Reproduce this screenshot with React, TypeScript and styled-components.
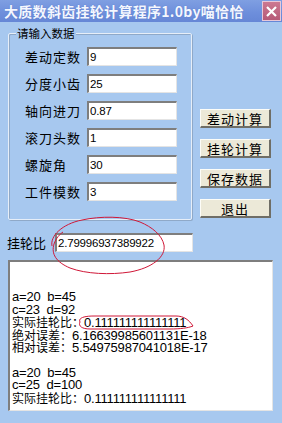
import React from "react";
import styled, { createGlobalStyle } from "styled-components";

const GlobalStyle = createGlobalStyle`
  html, body {
    margin: 0;
    padding: 0;
    background: #a7c8ef;
  }
  * { box-sizing: border-box; }
`;

const CJK = `"Noto Sans CJK SC", "Liberation Sans", sans-serif`;
const LATIN = `"Liberation Sans", Arial, sans-serif`;

const Window = styled.div`
  position: relative;
  width: 282px;
  height: 423px;
  background: #a7c8ef;
  overflow: hidden;
  display: flex;
  flex-direction: column;
`;

const TitleBar = styled.div`
  height: 22px;
  background: linear-gradient(#7f9fe2, #6d8edb 60%, #6687d6);
  display: flex;
  align-items: center;
  justify-content: space-between;
  padding: 0 1px 0 4px;
`;

const TitleText = styled.div`
  color: #f4f7ff;
  font-family: ${CJK};
  font-weight: 700;
  font-size: 14px;
  letter-spacing: 0.3px;
  white-space: nowrap;
  overflow: hidden;
  text-shadow: 0 0 1px #5070c0;
`;

const CloseButton = styled.div`
  flex: none;
  width: 19px;
  height: 20px;
  background: linear-gradient(#cc7891, #b65a78);
  border: 1px solid #e8c8d8;
  display: flex;
  align-items: center;
  justify-content: center;
`;

const Body = styled.div`
  display: flex;
  flex-direction: column;
  padding: 11px 0 0 8px;
`;

const TopRow = styled.div`
  display: flex;
  gap: 8px;
`;

const GroupBox = styled.div`
  width: 184px;
  height: 187px;
  border: 1px solid #e6eef8;
  box-shadow: inset 1px 1px 0 #8fa9c8, 1px 1px 0 #8fa9c8;
  border-radius: 2px;
  padding: 13px 0 0 16px;
  display: flex;
  flex-direction: column;
  gap: 8px;
  position: relative;
`;

const Legend = styled.span`
  font-family: ${CJK};
  font-size: 11.5px;
  line-height: 14px;
  color: #000;
  padding: 0 1px;
  position: absolute;
  top: -8px;
  left: 7px;
  background: #a7c8ef;
`;

const FieldRow = styled.div`
  display: flex;
  align-items: center;
  height: 19px;
`;

const FieldLabel = styled.span`
  width: 62px;
  font-family: ${CJK};
  font-size: 13px;
  letter-spacing: 1px;
  color: #000;
  white-space: nowrap;
`;

const TextBox = styled.div<{ $w: number }>`
  width: ${(p) => p.$w}px;
  height: 19px;
  background: #fff;
  border-top: 2px solid #7e7e7e;
  border-left: 2px solid #7e7e7e;
  border-right: 1px solid #e4e4e4;
  border-bottom: 1px solid #e4e4e4;
  font-family: ${LATIN};
  font-size: 11.5px;
  letter-spacing: -0.2px;
  line-height: 16px;
  padding-left: 1px;
  color: #000;
  white-space: nowrap;
  overflow: hidden;
`;

const ButtonColumn = styled.div`
  display: flex;
  flex-direction: column;
  gap: 11px;
  padding-top: 76px;
`;

const Button = styled.div`
  width: 71px;
  height: 19px;
  background: #ece9d8;
  border-top: 1px solid #fdfdf8;
  border-left: 1px solid #fdfdf8;
  border-right: 2px solid #6f6e66;
  border-bottom: 2px solid #6f6e66;
  display: flex;
  align-items: center;
  justify-content: center;
  font-family: ${CJK};
  font-size: 13px;
  letter-spacing: 1px;
  color: #000;
`;

const RatioRow = styled.div`
  display: flex;
  align-items: center;
  margin: 13px 0 0 -1px;
`;

const RatioLabel = styled.span`
  width: 48px;
  font-family: ${CJK};
  font-size: 13px;
  color: #000;
`;

const Output = styled.div`
  margin-top: 8px;
  width: 265px;
  height: 151px;
  background: #fff;
  border-top: 2px solid #7e7e7e;
  border-left: 2px solid #7e7e7e;
  border-right: 1px solid #e4e4e4;
  border-bottom: 1px solid #e4e4e4;
  padding: 29px 0 0 2px;
  color: #000;
`;

const Line = styled.div`
  display: flex;
  align-items: baseline;
  height: 12.6px;
  line-height: 12.6px;
  white-space: pre;
`;

const Head = styled.span`
  font-family: ${CJK};
  font-size: 12px;
`;

const Num = styled.span`
  font-family: ${LATIN};
  font-size: 13px;
  letter-spacing: -0.2px;
`;

const Marks = styled.svg`
  position: absolute;
  left: 0;
  top: 0;
  pointer-events: none;
`;

const fields = [
  ["差动定数", "9"],
  ["分度小齿", "25"],
  ["轴向进刀", "0.87"],
  ["滚刀头数", "1"],
  ["螺旋角", "30"],
  ["工件模数", "3"],
];

const lines: [string, string][] = [
  ["", "a=20  b=45"],
  ["", "c=23  d=92"],
  ["实际挂轮比：", "0.111111111111111"],
  ["绝对误差：", "6.16639985601131E-18"],
  ["相对误差：", "5.54975987041018E-17"],
  ["", ""],
  ["", "a=20  b=45"],
  ["", "c=25  d=100"],
  ["实际挂轮比：", "0.111111111111111"],
];

export default function App() {
  return (
    <Window>
      <GlobalStyle />
      <TitleBar>
        <TitleText>大质数斜齿挂轮计算程序1.0by喵恰恰</TitleText>
        <CloseButton>
          <svg width="13" height="13" viewBox="0 0 13 13">
            <path d="M2 2 L11 11 M11 2 L2 11" stroke="#fff" strokeWidth="2.2" />
          </svg>
        </CloseButton>
      </TitleBar>
      <Body>
        <TopRow>
          <GroupBox>
            <Legend>请输入数据</Legend>
            {fields.map(([label, value]) => (
              <FieldRow key={label}>
                <FieldLabel>{label}</FieldLabel>
                <TextBox $w={90}>{value}</TextBox>
              </FieldRow>
            ))}
          </GroupBox>
          <ButtonColumn>
            <Button>差动计算</Button>
            <Button>挂轮计算</Button>
            <Button>保存数据</Button>
            <Button>退出</Button>
          </ButtonColumn>
        </TopRow>
        <RatioRow>
          <RatioLabel>挂轮比</RatioLabel>
          <TextBox $w={138}>2.79996937389922</TextBox>
        </RatioRow>
        <Output>
          {lines.map(([head, num], i) => (
            <Line key={i}>
              {head && <Head>{head}</Head>}
              <Num>{num}</Num>
            </Line>
          ))}
        </Output>
      </Body>
      <Marks width="282" height="423" viewBox="0 0 282 423">
        <path
          d="M52 246 C50 236 62 224 82 220 C100 216 125 216 140 222 C152 227 162 235 164 245 C166 257 152 268 130 272 C110 275 86 274 70 268 C56 262 51 254 54 244 C56 238 60 234 63 232"
          fill="none"
          stroke="#d01838"
          strokeWidth="1"
        />
        <path
          d="M80 322 C78 318 84 316 94 316 L176 316 C184 316 189 320 193 326 C188 328 180 329 170 329 L90 329 C82 329 78 326 80 322"
          fill="none"
          stroke="#d01838"
          strokeWidth="1"
        />
      </Marks>
    </Window>
  );
}
